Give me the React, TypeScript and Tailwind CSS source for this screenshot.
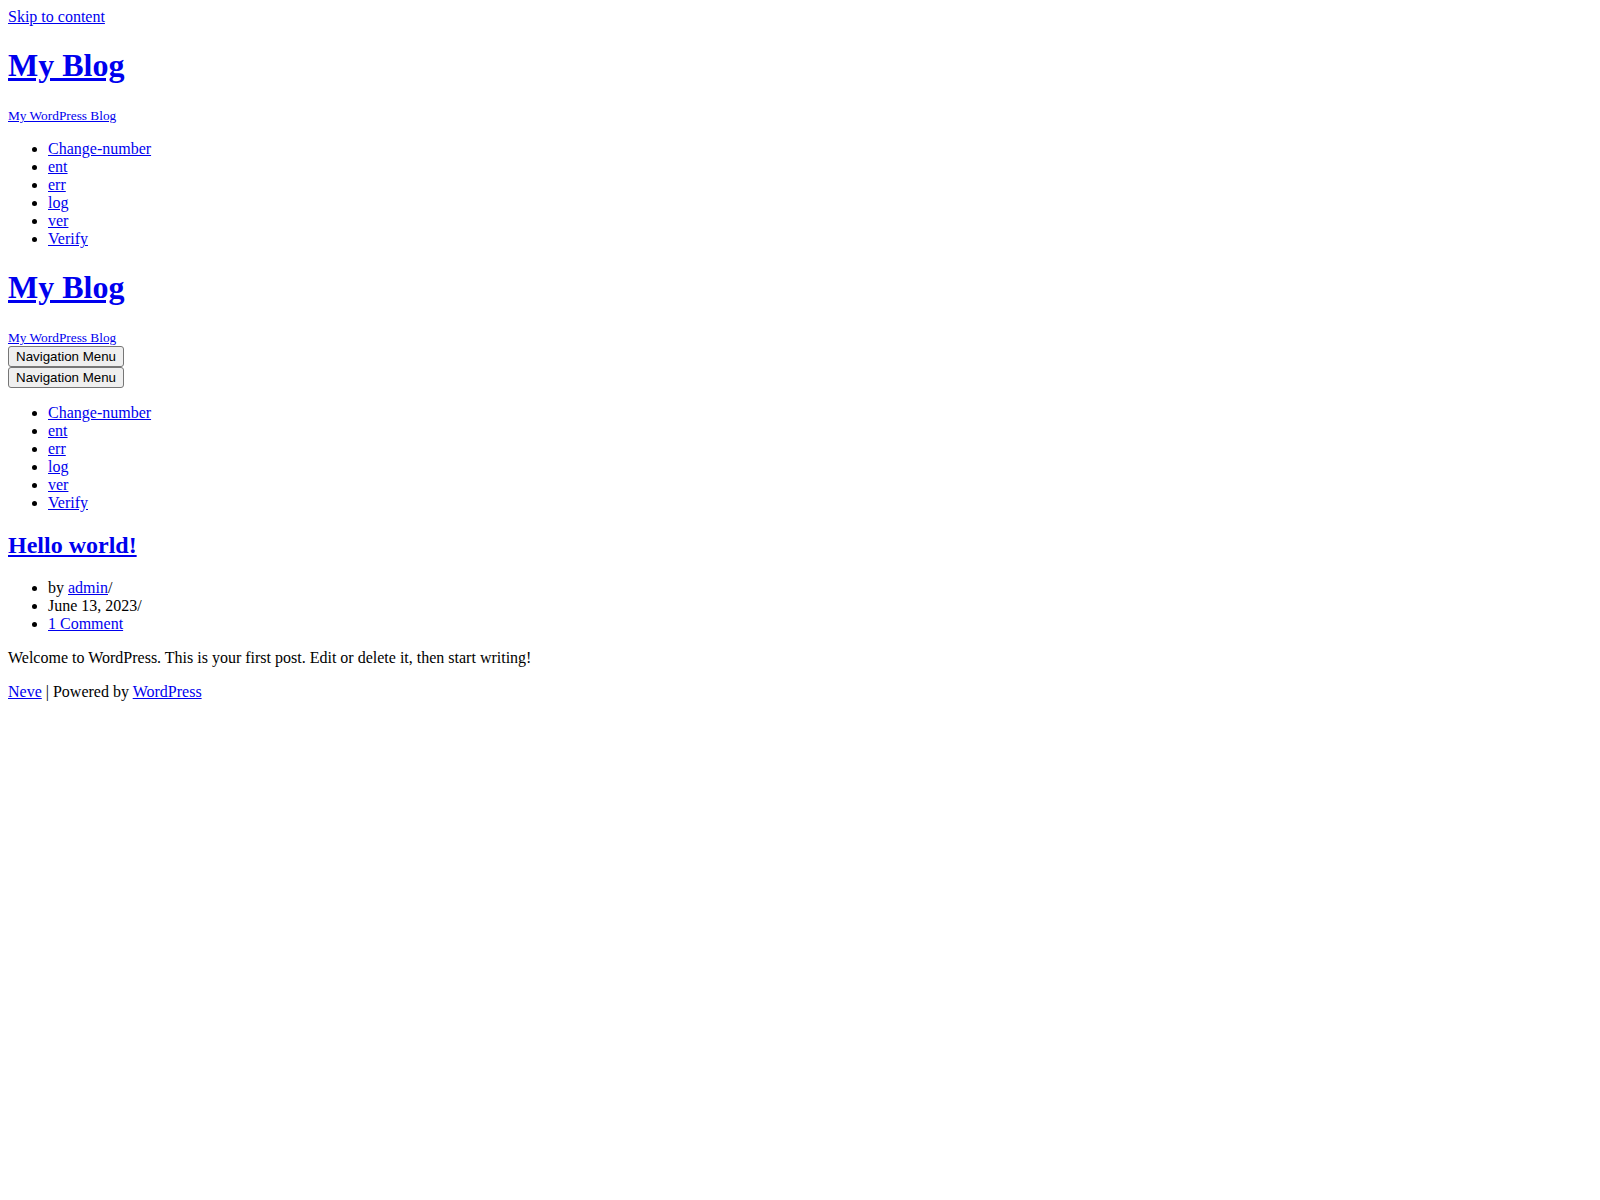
import React from "react";

const serif = { fontFamily: '"Liberation Serif", "Times New Roman", serif' };

function A({ children, className = "" }: { children: React.ReactNode; className?: string }) {
  return (
    <a href="#" className={`text-[#0000ee] underline ${className}`}>
      {children}
    </a>
  );
}

function Menu() {
  const items = ["Change-number", "ent", "err", "log", "ver", "Verify"];
  return (
    <ul className="list-disc pl-[40px] my-[16px]">
      {items.map((i) => (
        <li key={i} className="leading-[18px]">
          <A>{i}</A>
        </li>
      ))}
    </ul>
  );
}

function NavButton() {
  return (
    <button
      className="block h-[21px] bg-[#efefef] border border-[#767676] rounded-[3px] px-[7px] text-[13.333px] leading-[15px] text-black"
      style={{ fontFamily: '"Liberation Sans", Arial, sans-serif' }}
    >
      Navigation Menu
    </button>
  );
}

export default function App() {
  return (
    <div className="bg-white min-h-[1200px] p-[8px] text-[16px] leading-[18px] text-black" style={serif}>
      <div className="h-[18px]">
        <A>Skip to content</A>
      </div>
      <h1 className="text-[32px] font-bold leading-[36.8px] mt-[20.5px] mb-[22.4px]">
        <A>My Blog</A>
      </h1>
      <p className="h-[18.4px] leading-[18.4px]">
        <A className="text-[13.333px]">My WordPress Blog</A>
      </p>
      <Menu />
      <h1 className="text-[32px] font-bold leading-[36.8px] mt-[20.5px] mb-[23.4px]">
        <A>My Blog</A>
      </h1>
      <p className="h-[17px] leading-[16px]">
        <A className="text-[13.333px]">My WordPress Blog</A>
      </p>
      <NavButton />
      <NavButton />
      <Menu />
      <h2 className="text-[24px] font-bold leading-[27.6px] mt-[19.92px] mb-[19.92px]">
        <A>Hello world!</A>
      </h2>
      <ul className="list-disc pl-[40px] my-[16px]">
        <li className="leading-[18px]">
          by <A>admin</A>/
        </li>
        <li className="leading-[18px]">June 13, 2023/</li>
        <li className="leading-[18px]">
          <A>1 Comment</A>
        </li>
      </ul>
      <p className="my-[16px] leading-[18px]">
        Welcome to WordPress. This is your first post. Edit or delete it, then start writing!
      </p>
      <p className="my-[16px] leading-[18px]">
        <A>Neve</A> | Powered by <A>WordPress</A>
      </p>
    </div>
  );
}
